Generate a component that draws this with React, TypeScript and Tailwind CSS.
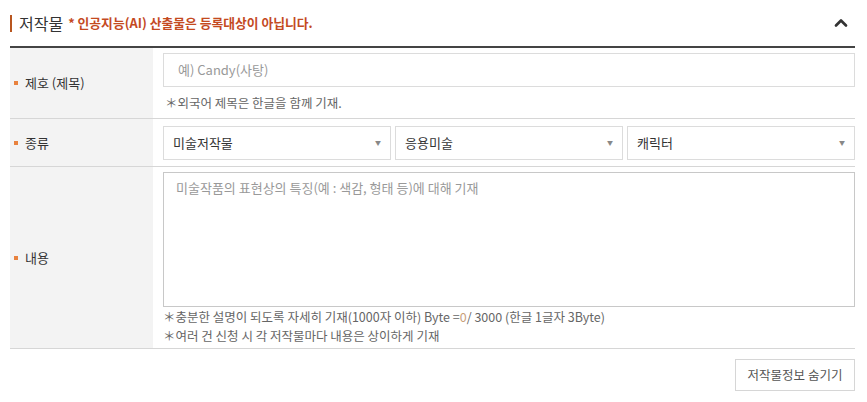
import { ChevronUp } from "lucide-react";

function Label({ children }: { children: string }) {
  return (
    <div className="flex w-[143px] shrink-0 items-center bg-[#f3f3f3] pl-[4px] text-[13px] text-[#333]">
      <span className="mr-[7px] inline-block h-[4px] w-[4px] bg-[#e8823f]" />
      {children}
    </div>
  );
}

function Select({ value }: { value: string }) {
  return (
    <div className="flex h-[34px] flex-1 items-center justify-between border border-[#dcdcdc] bg-white pl-[9px] pr-[9px] text-[13px] text-[#333]">
      <span>{value}</span>
      <span className="text-[6px] text-[#888]">▼</span>
    </div>
  );
}

export default function App() {
  return (
    <div
      className="h-[402px] w-full bg-white pl-[10px] pr-[12px]"
      style={{ fontFamily: '"Noto Sans CJK KR", "Noto Sans", sans-serif' }}
    >
      {/* header */}
      <div className="flex h-[46px] items-center justify-between">
        <div className="flex items-center">
          <span className="mr-[7px] inline-block h-[17px] w-[2px] bg-[#b8561f]" />
          <h2 className="text-[16px] leading-none text-[#333]">저작물</h2>
          <span className="ml-[5px] text-[12.8px] font-bold text-[#c44a1f]">
            * 인공지능(AI) 산출물은 등록대상이 아닙니다.
          </span>
        </div>
        <ChevronUp className="mr-[4px] h-[20px] w-[20px] text-[#333]" strokeWidth={3.2} />
      </div>

      {/* table */}
      <div className="border-t-2 border-[#444]">
        <div className="flex h-[71px] border-b border-[#d6d6d6]">
          <Label>제호 (제목)</Label>
          <div className="flex flex-1 flex-col pl-[10px] pt-[5px]">
            <div className="flex h-[34px] items-center border border-[#dcdcdc] pl-[14px] text-[13px] text-[#999]">
              예) Candy(사탕)
            </div>
            <p className="mt-[7px] pl-[2px] text-[12.5px] text-[#666]">＊외국어 제목은 한글을 함께 기재.</p>
          </div>
        </div>

        <div className="flex h-[48px] border-b border-[#d6d6d6]">
          <Label>종류</Label>
          <div className="flex flex-1 items-center gap-[4px] pl-[10px]">
            <Select value="미술저작물" />
            <Select value="응용미술" />
            <Select value="캐릭터" />
          </div>
        </div>

        <div className="flex h-[182px] border-b border-[#d6d6d6]">
          <Label>내용</Label>
          <div className="flex flex-1 flex-col pl-[10px] pt-[5px]">
            <div className="h-[135px] border border-[#c8c8c8] px-[12px] pt-[5px] text-[13px] text-[#999]">
              미술작품의 표현상의 특징(예 : 색감, 형태 등)에 대해 기재
            </div>
            <div className="mt-[1px] text-[12.5px] leading-[18.5px] text-[#666]">
              <p>
                ＊충분한 설명이 되도록 자세히 기재(1000자 이하) Byte =<span className="text-[#c9a07a]">0</span>/ 3000 (한글 1글자 3Byte)
              </p>
              <p>＊여러 건 신청 시 각 저작물마다 내용은 상이하게 기재</p>
            </div>
          </div>
        </div>
      </div>

      <div className="mt-[10px] flex justify-end">
        <button className="h-[32px] w-[120px] border border-[#d6d6d6] bg-white text-[12.5px] text-[#555]">
          저작물정보 숨기기
        </button>
      </div>
    </div>
  );
}
